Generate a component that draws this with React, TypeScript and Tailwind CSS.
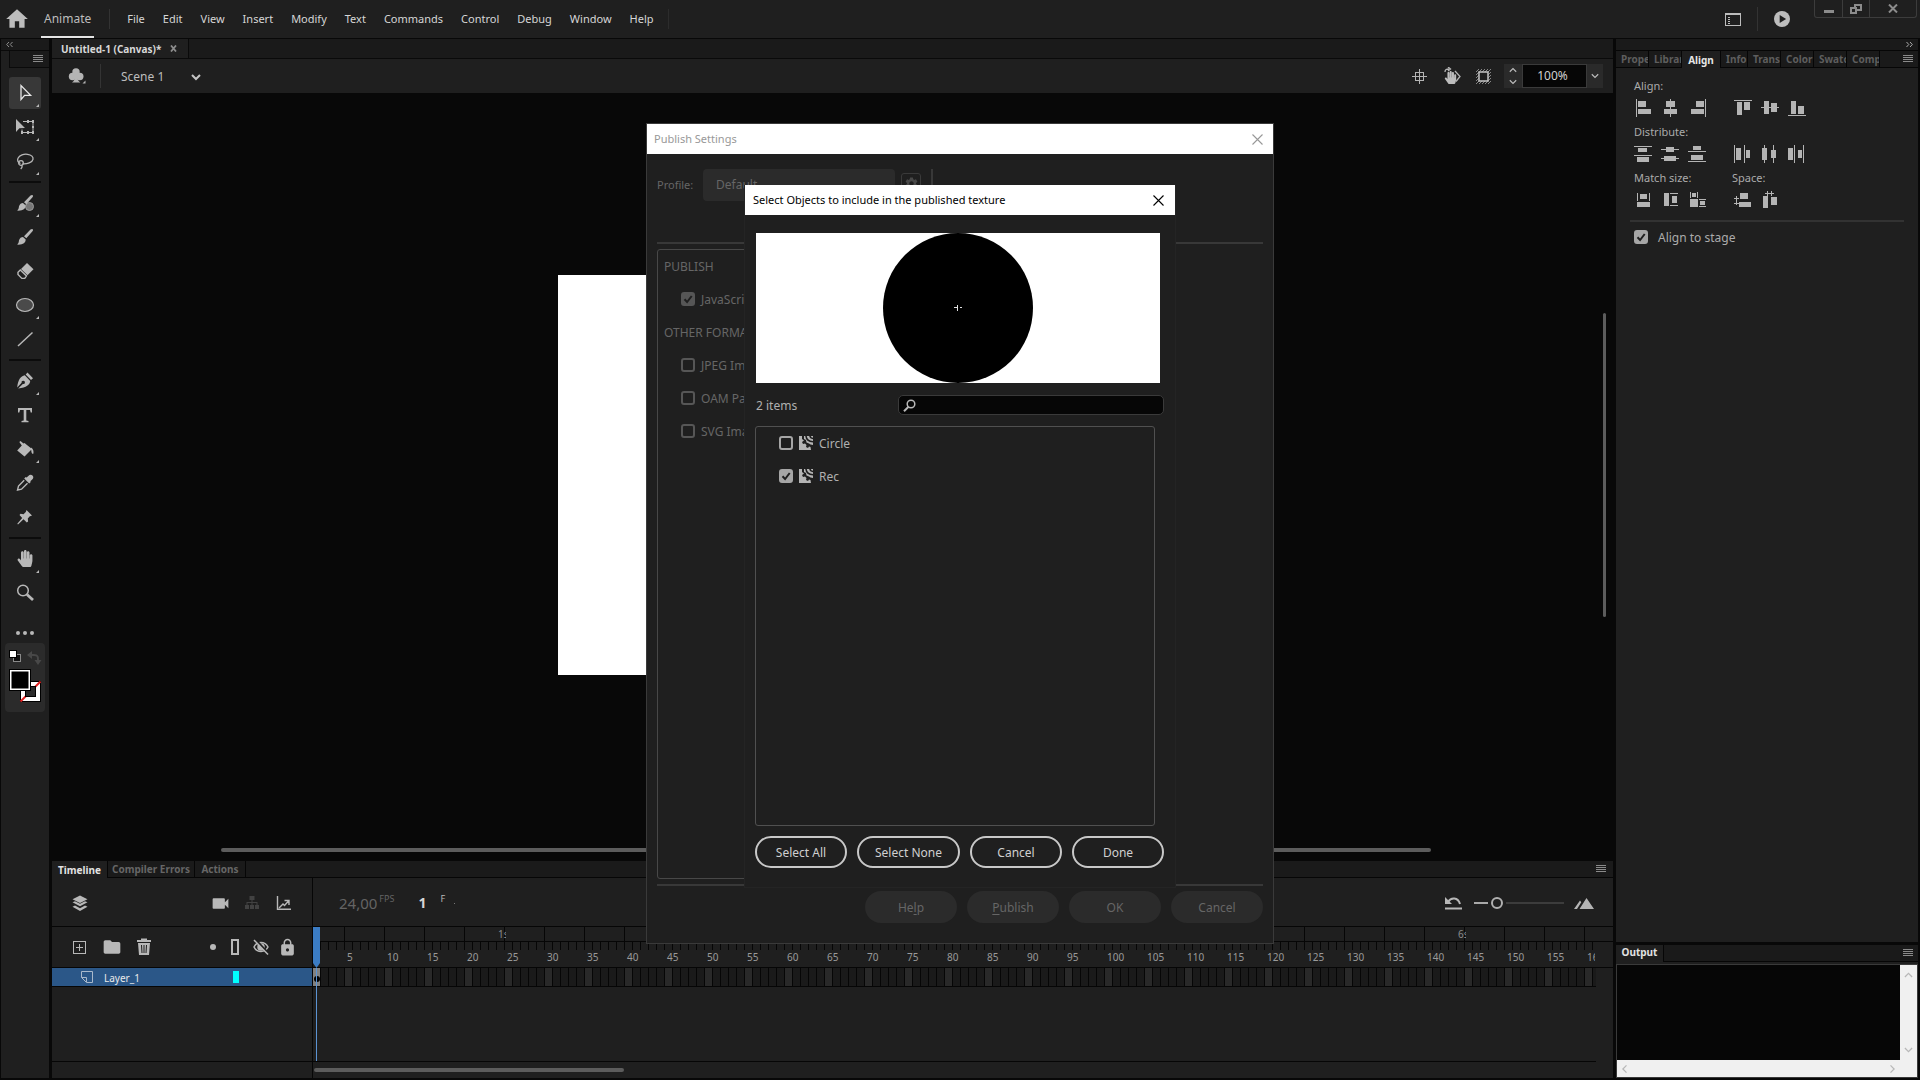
import React from "react";
import clsx from "clsx";
import { FaHandPaper } from "react-icons/fa";
import { MdFolder, MdHome, MdLock, MdPlayArrow, MdSettings, MdVideocam } from "react-icons/md";

type Rect = [number, number, number, number];

const MENUS = ["File", "Edit", "View", "Insert", "Modify", "Text", "Commands", "Control", "Debug", "Window", "Help"];

const FRAMES = Array.from({ length: 300 }, (_, i) => i + 1);
const FRAME_GROUPS = Array.from({ length: 60 }, (_, i) => (i + 1) * 5);
const SECONDS = Array.from({ length: 12 }, (_, i) => i + 1);
const FRAME_WIDTH = 8;
const FPS = 24;

const ALIGN_ICONS: Record<string, Rect[]> = {
  "Align left": [[2, 0, 1, 18], [4, 2, 8, 6], [4, 10, 13, 5]],
  "Align center": [[9, 0, 1, 18], [5, 2, 9, 6], [3, 10, 13, 5]],
  "Align right": [[17, 0, 1, 18], [8, 2, 8, 6], [3, 10, 13, 5]],
  "Align top": [[0, 1, 18, 1], [3, 3, 5, 13], [10, 3, 6, 8]],
  "Align middle": [[0, 8, 18, 1], [3, 2, 5, 13], [10, 4, 6, 9]],
  "Align bottom": [[0, 16, 18, 1], [3, 2, 5, 13], [10, 7, 6, 8]],
};

const DISTRIBUTE_ICONS: Record<string, Rect[]> = {
  "Distribute top": [[0, 1, 18, 1], [4, 3, 9, 4], [0, 10, 18, 1], [3, 12, 12, 5]],
  "Distribute middle": [[0, 4, 18, 1], [5, 2, 8, 5], [0, 13, 18, 1], [3, 11, 12, 5]],
  "Distribute bottom": [[5, 1, 8, 4], [0, 6, 18, 1], [3, 10, 12, 5], [0, 16, 18, 1]],
  "Distribute left": [[0, 0, 1, 18], [2, 3, 5, 12], [10, 0, 1, 18], [12, 5, 4, 8]],
  "Distribute center": [[3, 0, 1, 18], [1, 3, 5, 12], [12, 0, 1, 18], [10, 5, 5, 8]],
  "Distribute right": [[0, 3, 5, 12], [6, 0, 1, 18], [10, 5, 4, 8], [15, 0, 1, 18]],
};

const SIZE_ICONS: Record<string, Rect[]> = {
  "Match width": [[3, 2, 1, 8], [15, 2, 1, 8], [6, 3, 7, 5], [3, 11, 13, 5]],
  "Match height": [[3, 2, 5, 13], [9, 2, 8, 1], [9, 14, 8, 1], [11, 5, 5, 7]],
  "Match both": [[2, 1, 1, 6], [9, 1, 1, 6], [4, 2, 4, 4], [2, 8, 8, 8], [11, 8, 7, 1], [11, 15, 7, 1], [12, 10, 5, 4]],
  "Space vertically": [[2, 5, 1, 9], [0, 7, 5, 1], [0, 12, 5, 1], [6, 2, 8, 6], [5, 11, 12, 5]],
  "Space horizontally": [[4, 2, 9, 1], [6, 0, 1, 5], [10, 0, 1, 5], [2, 5, 5, 12], [10, 6, 6, 8]],
};

const RectIcons = ({ icons }: { icons: Record<string, Rect[]> }) => (
  <div className="grid grid-cols-[27px_27px_46px_27px_27px_27px]">
    {Object.entries(icons).map(([name, rects]) => (
      <button key={name} aria-label={name} className="w-[18px]">
        <svg width="18" height="18" fill="#b4b4b4" shapeRendering="crispEdges">
          {rects.map(([x, y, w, h], i) => (
            <rect key={i} x={x} y={y} width={w} height={h} />
          ))}
        </svg>
      </button>
    ))}
  </div>
);

const MenuLines = ({ label }: { label: string }) => (
  <button aria-label={label} className="shrink-0">
    <svg width="10" height="8" fill="#8a8a8a" shapeRendering="crispEdges">
      <path d="M0 0h10v1H0zM0 2h10v1H0zM0 4h10v1H0zM0 6h10v1H0z" />
    </svg>
  </button>
);

const CloseIcon = ({ size = 11 }: { size?: number }) => (
  <svg width={size} height={size} viewBox="0 0 11 11" stroke="currentColor" strokeWidth="1.1">
    <path d="M0.5 0.5l10 10M10.5 0.5l-10 10" />
  </svg>
);

const Chevron = ({ className, width = 10 }: { className?: string; width?: number }) => (
  <svg width={width} height="6" viewBox="0 0 10 6" fill="none" stroke="currentColor" strokeWidth="1.4" className={className}>
    <path d="M1 0.8l4 4 4-4" />
  </svg>
);

type CheckboxProps = { label: string; checked?: boolean; dim?: boolean; gap?: string; children?: React.ReactNode };

const Checkbox = ({ label, checked, dim, gap = "gap-[6px]", children }: CheckboxProps) => (
  <label className={clsx("flex h-4 items-center whitespace-nowrap text-[12px] leading-4", gap)}>
    <span className="grid shrink-0">
      <input
        type="checkbox"
        defaultChecked={checked}
        className={clsx(
          "peer size-[14px] appearance-none rounded-[3px] border-2 [grid-area:1/1]",
          dim ? "border-[#565656] checked:bg-[#565656]" : "border-[#a6a6a6] checked:bg-[#a6a6a6]"
        )}
      />
      <svg
        width="14"
        height="14"
        fill="none"
        stroke="#1f1f1f"
        strokeWidth="2"
        className="pointer-events-none invisible [grid-area:1/1] peer-checked:visible"
      >
        <path d="M3.5 7.2l2.6 2.8 4.6-6" />
      </svg>
    </span>
    {children}
    <span className="pt-[2px]">{label}</span>
  </label>
);

const TopBar = () => (
  <header className="flex h-[38px] items-center bg-[#1f1f1f] text-[#d6d6d6]">
    <button aria-label="Home" className="ml-1 text-[#bcbcbc]">
      <MdHome size={26} />
    </button>
    <div className="ml-[11px] flex h-full items-end">
      <button className="h-[27px] border-b-2 border-[#e4e4e4] px-[3px] text-[12px] leading-[15px] text-[#bdbdbd]">
        <span className="block h-full">Animate</span>
      </button>
    </div>
    <span className="ml-[15px] h-5 w-px bg-[#333]" />
    <nav className="ml-[17px] flex items-center gap-[18px] text-[11px] leading-4">
      {MENUS.map((menu) => (
        <button key={menu}>{menu}</button>
      ))}
    </nav>
    <span className="ml-[14px] h-5 w-px bg-[#2c2c2c]" />
    <div className="flex-1" />
    <button aria-label="Workspaces">
      <svg width="16" height="13" fill="none" stroke="#bdbdbd" shapeRendering="crispEdges">
        <path d="M0.5 0.5h15v12h-15zM0 1.5h16" />
        <path d="M2.5 4.5h2M2.5 6.5h2M2.5 8.5h2M2.5 10h2" />
      </svg>
    </button>
    <span className="mx-4 h-6 w-px bg-[#333]" />
    <button aria-label="Test movie" className="flex size-4 items-center justify-center rounded-full bg-[#bdbdbd] text-[#1f1f1f]">
      <MdPlayArrow size={14} />
    </button>
    <div className="mr-[3px] ml-6 flex h-[18px] divide-x divide-[#3c3c3c] self-start rounded-b-[3px] border-x border-b border-[#3c3c3c] text-[#8c8c8c]">
      <button aria-label="Minimize" className="flex w-7 items-center justify-center pt-[5px]">
        <span className="h-[3px] w-[10px] bg-current" />
      </button>
      <button aria-label="Restore" className="flex w-[27px] items-center justify-center">
        <svg width="12" height="10" fill="none" stroke="currentColor" strokeWidth="2">
          <path d="M1 4h5v5H1zM5 3V1h6v5H7" />
        </svg>
      </button>
      <button aria-label="Close" className="flex w-[46px] items-center justify-center">
        <svg width="10" height="9" stroke="currentColor" strokeWidth="2">
          <path d="M1 0.5l8 8M9 0.5l-8 8" />
        </svg>
      </button>
    </div>
  </header>
);

type ToolProps = { name: string; active?: boolean; more?: boolean; children: React.ReactNode };

const Tool = ({ name, active, more, children }: ToolProps) => (
  <button
    aria-label={name}
    className={clsx("relative my-px flex h-8 w-8 shrink-0 items-center justify-center rounded-[3px] text-[#b8b8b8]", active && "bg-[#383838] text-[#e8e8e8]")}
  >
    <svg width="20" height="20" viewBox="0 0 20 20" fill="currentColor">
      {children}
    </svg>
    {more && (
      <svg width="3" height="3" className="absolute right-[2px] bottom-[2px]" fill="#b8b8b8">
        <path d="M3 0v3H0z" />
      </svg>
    )}
  </button>
);

const ToolDivider = () => <span className="my-[3px] h-[2px] w-8 shrink-0 bg-[#0c0c0c]" />;

const ToolsPanel = () => (
  <aside className="flex w-12 flex-col bg-[#1f1f1f]">
    <div className="flex h-3 items-center border-b border-[#0a0a0a] bg-[#1a1a1a] pl-[5px] text-[#8f8f8f]">
      <svg width="7" height="5" fill="none" stroke="currentColor">
        <path d="M3 0L0.7 2.5 3 5M6.5 0L4.2 2.5 6.5 5" />
      </svg>
    </div>
    <div className="flex h-[17px] shrink-0 pl-2">
      <div className="flex flex-1 items-center justify-end border-b border-l border-[#0a0a0a] bg-[#1a1a1a] pr-[6px]">
        <MenuLines label="Tools menu" />
      </div>
    </div>
    <div className="flex flex-col items-center pt-2">
      <Tool name="Selection" active more>
        <path d="M6 2.5v14l3.6-4.2h6z" fill="none" stroke="currentColor" strokeWidth="1.3" />
      </Tool>
      <Tool name="Free transform" more>
        <path d="M1 2v13l3.4-3.8L10 11z" />
        <path d="M8 4.500h10v11H7v-3" fill="none" stroke="currentColor" />
        <path d="M17 3h2v3h-2zM17 14h2v3h-2zM6 14h2v3H6zM12 3h2v3h-2zM12 14h2v3h-2zM17 9h2v2h-2z" />
      </Tool>
      <Tool name="Lasso" more>
        <g fill="none" stroke="currentColor" strokeWidth="1.3">
          <path d="M5.500 12.500C3 11.500 2 9.500 3 7.300 4.500 4 9 2.800 12.500 3.300c4 .5 6 2.700 5.500 5-.7 3.200-6 5-10.500 4.500" />
          <circle cx="6" cy="12" r="2.300" />
          <path d="M6.500 14.200c1 1 .8 2.500-.8 3.800" />
        </g>
      </Tool>
      <ToolDivider />
      <Tool name="Fluid brush" more>
        <circle cx="14.500" cy="13.500" r="4" fill="#777" stroke="#999" />
        <path d="M17 2c1.200 0 1.300 1 .7 2l-6.400 7.200-2.300-2L15.500 2.600zM8 10l2.700 2.500C10.500 16 8 18 2 17.600c2-1.400 1.600-2.400 2-4.300C4.600 11.200 6.300 10 8 10z" />
      </Tool>
      <Tool name="Classic brush">
        <path d="M17 2c1.200 0 1.300 1 .7 2l-6.400 7.200-2.300-2L15.500 2.600zM8 10l2.700 2.500C10.500 16 8 18 2 17.600c2-1.400 1.600-2.400 2-4.300C4.600 11.200 6.300 10 8 10z" />
      </Tool>
      <Tool name="Eraser">
        <path d="M12 2l6.500 6.300-6 6L6 8z" />
        <path d="M5.300 8.900l6.200 6-1.700 2.500H6.800L3 13.500v-2.300z" fill="none" stroke="currentColor" strokeWidth="1.4" />
      </Tool>
      <Tool name="Oval" more>
        <ellipse cx="10" cy="10" rx="8.500" ry="6.500" fill="#4a4a4a" stroke="currentColor" strokeWidth="1.200" />
      </Tool>
      <Tool name="Line">
        <path d="M3 17L17.500 3.500" stroke="currentColor" strokeWidth="1.500" />
      </Tool>
      <ToolDivider />
      <Tool name="Pen" more>
        <path d="M12.500 1.500l5.500 5.800-2 1.700-5.300-5.500zM9.800 4.300l5.400 5.700c-.5 3.800-3.500 6.600-12 7.500L7.800 13a1.700 1.700 0 1 0-1.200-1.200L2.200 16.500C3 9 5.600 5 9.800 4.300z" />
      </Tool>
      <Tool name="Text">
        <path d="M3 3h14v4.500h-1.300l-.7-2.500h-3.700v10.500l2.200.5v1.200H6.500V16l2.200-.5V5H5l-.7 2.500H3z" />
      </Tool>
      <Tool name="Paint bucket" more>
        <path d="M5.500 2l3 2.500 1-.5 7.500 6-7.500 7.500-7.300-6L6.800 6.500 4.300 3zM16 8.500c2.500 1.500 3 4 2.200 6.500-1.800-.3-1.800-2-2.200-6.500z" />
      </Tool>
      <Tool name="Eyedropper">
        <path d="M17.500 2.500c1.300 1.300 1 3-.5 4.200l-1.700 1.500.5.800-1.600 1.400-5-5L10.700 4l.9.500L13.300 3c1.300-1.500 3-1.700 4.200-.5z" />
        <path d="M9.200 7.200L3.500 13l-1 4 4-.8 6-5.900" fill="none" stroke="currentColor" strokeWidth="1.400" />
      </Tool>
      <Tool name="Asset warp">
        <path d="M11.500 3l5.500 5.500-1.200.6-1 .1-2 2.300.3 3-1.300 1-3.300-3.300L3 17.500l-.7-.7L7.200 11 4.500 8l1-1.200 3 .4 2.300-2.200z" />
      </Tool>
      <ToolDivider />
      <Tool name="Hand" more>
        <FaHandPaper x="1.500" y="1" size={17} />
      </Tool>
      <Tool name="Zoom">
        <circle cx="8" cy="7.500" r="5.300" fill="none" stroke="currentColor" strokeWidth="1.500" />
        <path d="M12 11.500l6 5.500" stroke="currentColor" strokeWidth="2.800" />
      </Tool>
      <button aria-label="Edit toolbar" className="flex h-[33px] items-end justify-center gap-[3px] pb-2">
        <span className="size-1 rounded-full bg-[#b8b8b8]" />
        <span className="size-1 rounded-full bg-[#b8b8b8]" />
        <span className="size-1 rounded-full bg-[#b8b8b8]" />
      </button>
      <button aria-label="Fill and stroke colors" className="rounded-[4px] bg-[#2b2b2b]">
        <svg width="40" height="69">
          <rect x="8.500" y="11.500" width="7" height="7" fill="#111" stroke="#8a8a8a" />
          <rect x="4.500" y="7.500" width="7" height="7" fill="#fff" stroke="#000" />
          <path d="M25 12h4c4 0 4 2 4 5v2" fill="none" stroke="#484848" strokeWidth="2" />
          <path d="M27 8l-5 4 5 4zM29.500 17h7L33 22z" fill="#484848" />
          <rect x="15.500" y="38.500" width="20" height="20" fill="#fff" stroke="#000" />
          <path d="M15.500 58.500l20-20" stroke="#e02020" strokeWidth="2" />
          <rect x="20.500" y="43.500" width="10" height="10" fill="#2b2b2b" stroke="#000" />
          <rect x="4.500" y="26.500" width="21" height="21" fill="#fff" stroke="#000" />
          <rect x="6.500" y="28.500" width="17" height="17" fill="#000" />
        </svg>
      </button>
    </div>
  </aside>
);

const SceneBar = () => (
  <div className="flex h-[34px] items-center bg-[#1f1f1f] text-[12px] leading-4 text-[#bdbdbd]">
    <button aria-label="Edit symbols" className="ml-4">
      <svg width="18" height="18" fill="#b4b4b4">
        <circle cx="8" cy="5" r="3.700" />
        <circle cx="4.500" cy="9.500" r="3.700" />
        <circle cx="11.800" cy="9.500" r="3.700" />
        <path d="M7 8h2.300c0 4 .7 6 3 7.500H4C6.300 14 7 12 7 8zM17.500 13.500v3h-3z" />
      </svg>
    </button>
    <span className="ml-[14px] h-6 w-px bg-[#343434]" />
    <button className="ml-5 flex items-center gap-[26px] pt-[2px]">
      Scene 1
      <svg width="12" height="7" fill="none" stroke="#c4c4c4" strokeWidth="2">
        <path d="M2 1l4 4 4-4" />
      </svg>
    </button>
    <div className="flex-1" />
    <button aria-label="Center stage">
      <svg width="15" height="15" fill="none" stroke="#b4b4b4" shapeRendering="crispEdges">
        <path d="M7.500 0v15M0 7.500h15M3.500 3.500h8v8h-8z" />
      </svg>
    </button>
    <button aria-label="Rotation" className="ml-4">
      <svg width="18" height="18" fill="#b4b4b4">
        <FaHandPaper x="1" y="4" size={13} />
        <path d="M2 5c0-2.500 1.500-3 4-3M5 0l2.500 2L5 4M12 4l5 5.500-4 5" fill="none" stroke="#b4b4b4" strokeWidth="1.300" />
      </svg>
    </button>
    <button aria-label="Clip content" className="ml-[15px]">
      <svg width="15" height="15" fill="none">
        <path d="M0 3l3-3M0 6l6-6M0 9l9-9M0 12l12-12M0 15L15 0M3 15L15 3M6 15l9-9M9 15l6-6M12 15l3-3" stroke="#858585" />
        <path d="M3 3h9v9H3z" fill="#1f1f1f" stroke="#c4c4c4" strokeWidth="1.500" />
      </svg>
    </button>
    <div className="mr-[10px] ml-[13px] flex h-6 bg-[#2a2a2a]">
      <span className="flex w-[18px] flex-col items-center justify-between py-[3px]">
        <Chevron className="rotate-180" width={8} />
        <Chevron width={8} />
      </span>
      <input
        aria-label="Zoom level"
        defaultValue="100%"
        className="w-[65px] border border-[#3a3a3a] bg-[#060606] pr-1 text-center text-[12px] text-[#d0d0d0]"
      />
      <button aria-label="Zoom presets" className="flex w-4 items-center justify-center">
        <Chevron width={8} />
      </button>
    </div>
  </div>
);

const Workspace = () => (
  <section className="flex min-h-0 flex-1 flex-col">
    <div className="flex h-5 border-b border-[#0a0a0a] bg-[#1a1a1a]">
      <div className="flex items-center gap-[9px] border-r border-[#0a0a0a] bg-[#1f1f1f] pr-[11px] pl-[9px] text-[10px] leading-4 font-bold text-[#d8d8d8]">
        Untitled-1 (Canvas)*
        <button aria-label="Close document" className="text-[#8c8c8c]">
          <svg width="7" height="7" stroke="currentColor" strokeWidth="1.800">
            <path d="M1 0.500l5 6M6 0.500l-5 6" />
          </svg>
        </button>
      </div>
    </div>
    <SceneBar />
    <div className="relative flex min-h-0 flex-1 items-center justify-center overflow-hidden pb-1">
      <div className="h-[400px] w-[550px] bg-white" />
      <span className="absolute top-[220px] right-[7px] h-[304px] w-[3px] rounded-full bg-[#5c5c5c]" />
      <span className="absolute right-[182px] bottom-[9px] left-[169px] h-1 rounded-full bg-[#5c5c5c]" />
    </div>
  </section>
);

const LayerHeader = () => (
  <div className="flex h-[41px] items-center border-b border-[#060606] pr-[17px] pl-5 text-[#b8b8b8]">
    <div className="flex flex-1 items-center gap-4">
      <button aria-label="New layer" className="w-4">
        <svg width="15" height="15" fill="none" stroke="currentColor" shapeRendering="crispEdges">
          <path d="M1.500 1.500h12v12h-12zM7.500 4v7M4 7.500h7" />
        </svg>
      </button>
      <button aria-label="New folder" className="flex w-4 justify-center">
        <MdFolder size={20} className="shrink-0" />
      </button>
      <button aria-label="Delete layer" className="w-4">
        <svg width="16" height="18" fill="currentColor">
          <path d="M5 2V0.500h6V2h4v2H1V2zM2 5h12l-1 12H3zM5 7l.5 8h1L6 7zM7.500 7v8h1V7zM10 7l-.5 8h1L11 7z" fillRule="evenodd" />
        </svg>
      </button>
    </div>
    <div className="flex items-center gap-[10px]">
      <button aria-label="Highlight layers" className="flex w-2 justify-center">
        <span className="size-[6px] rounded-full bg-current" />
      </button>
      <button aria-label="Show outlines" className="flex w-4 justify-center">
        <span className="h-4 w-2 border-2 border-current" />
      </button>
      <button aria-label="Hide layers">
        <svg width="16" height="16" fill="none" stroke="currentColor" strokeWidth="1.500">
          <path d="M1 8c3-6 11-6 14 0-3 6-11 6-14 0z" />
          <circle cx="8" cy="8" r="3" fill="currentColor" />
          <path d="M3 1l13 14" stroke="#1f1f1f" strokeWidth="2" />
          <path d="M1 1l14 14.500" />
        </svg>
      </button>
      <button aria-label="Lock layers" className="flex w-4 justify-center">
        <MdLock size={19} className="shrink-0" />
      </button>
    </div>
  </div>
);

const Layers = () => (
  <div className="flex w-[261px] shrink-0 flex-col border-r border-[#060606]">
    <div className="flex h-[49px] items-center border-b border-[#060606] px-5 pt-[2px] text-[#b8b8b8]">
      <button aria-label="Layer depth" className="flex-1">
        <svg width="16" height="17" fill="currentColor">
          <path d="M8 0.500l7.500 3.700L8 8 0.500 4.200zM0.500 7.300L3 6.200l5 2.600 5-2.600 2.500 1.100L8 11.300zM0.500 11.800L3 10.600 8 13.300l5-2.700 2.500 1.200L8 16z" />
        </svg>
      </button>
      <div className="flex items-center gap-4">
        <button aria-label="Add camera" className="flex w-4 justify-center">
          <MdVideocam size={21} className="shrink-0" />
        </button>
        <button aria-label="Parenting view" className="text-[#424242]">
          <svg width="16" height="14" fill="currentColor">
            <path d="M5.500 0h5v4h-5zM1 9h4v4H1zM6 9h4v4H6zM11 9h4v4h-4zM7.500 4h1v5h-1zM2.500 6h11v1h-11zM2.500 6h1v3h-1zM12.500 6h1v3h-1z" />
          </svg>
        </button>
        <button aria-label="Graph view">
          <svg width="16" height="16" fill="none" stroke="currentColor" strokeWidth="1.400">
            <path d="M1.500 1v13.300H15" />
            <path d="M3 13l4-4 1.500 1.500L12.500 6M8.500 5.500h4.500v4.500" />
          </svg>
        </button>
      </div>
    </div>
    <LayerHeader />
    <div className="flex h-[19px] items-center border-b border-[#060606] bg-[#2b5788] pl-[29px] text-[10px] leading-4 text-[#eaeaea]">
      <svg width="12" height="12" fill="none" stroke="#a9b9cc">
        <path d="M0.500 0.500h11v11h-6l-5-5zM5.500 11v-4.500h-5" />
      </svg>
      <span className="ml-[11px] flex-1 pt-px">Layer_1</span>
      <span className="mr-[73px] h-3 w-[6px] bg-[#00ffff]" />
    </div>
    <div className="flex-1" />
    <div className="h-[17px] border-t border-[#060606]" />
  </div>
);

const FrameRuler = () => (
  <div className="relative flex min-w-0 flex-1 flex-col">
    <div className="relative flex h-[15px] overflow-hidden border-b border-[#060606]">
      <span className="w-8 shrink-0 border-r border-[#060606]" />
      {FRAME_GROUPS.map((frame) => (
        <span key={frame} className="w-10 shrink-0 border-r border-[#060606]" />
      ))}
      {SECONDS.map((second) => (
        <span
          key={second}
          className="absolute top-0 w-[9px] overflow-hidden pl-px text-[10px] leading-[14px] text-[#8c8c8c]"
          style={{ left: (second * FPS - 1) * FRAME_WIDTH }}
        >
          {second}s
        </span>
      ))}
    </div>
    <div className="h-[26px] border-b border-[#060606]">
      <div className="mr-[18px] overflow-hidden">
        <div className="flex h-2">
          {FRAMES.map((frame) => (
            <span key={frame} className="w-2 shrink-0 border-r border-[#060606]" />
          ))}
        </div>
        <div className="flex h-[15px] pl-8 text-[10px] leading-[15px] text-[#9a9a9a]">
          {FRAME_GROUPS.map((frame) => (
            <span key={frame} className="w-10 shrink-0 pl-[2px]">
              {frame}
            </span>
          ))}
        </div>
      </div>
    </div>
    <div className="mr-[17px] flex h-[19px] overflow-hidden border-b border-[#060606]">
      {FRAMES.map((frame) => (
        <span
          key={frame}
          className={clsx(
            "flex w-2 shrink-0 items-end justify-center border-r border-[#060606] pb-1",
            frame === 1 ? "bg-[#808080]" : frame % 5 === 0 ? "bg-[#292929]" : "bg-[#1a1a1a]"
          )}
        >
          {frame === 1 && <i className="size-[6px] rounded-full bg-black" />}
        </span>
      ))}
    </div>
    <div className="mr-[17px] flex-1 border-b border-[#060606]" />
    <div className="flex h-4 items-center">
      <span className="ml-px h-1 w-[310px] rounded-full bg-[#5c5c5c]" />
    </div>
    <svg width="8" height="41" className="absolute top-0 left-0" fill="#3b7cc4">
      <path d="M0 0h7v36l-3.500 5L0 36z" />
    </svg>
    <span className="absolute top-[41px] bottom-[17px] left-[3px] w-px bg-[#5b93d3]" />
  </div>
);

const Timeline = () => (
  <section className="flex h-[217px] shrink-0 flex-col bg-[#1f1f1f]">
    <div className="flex h-[17px] shrink-0 items-stretch border-b border-[#060606] bg-[#1a1a1a] pr-[7px] text-[10px] leading-4 font-bold text-[#666]">
      <button className="-mb-px w-14 border-r border-[#060606] bg-[#1f1f1f] text-[#e2e2e2]">Timeline</button>
      <button className="w-[87px] border-r border-[#060606]">Compiler Errors</button>
      <button className="w-[51px] border-r border-[#060606]">Actions</button>
      <div className="flex flex-1 items-center justify-end">
        <MenuLines label="Timeline menu" />
      </div>
    </div>
    <div className="flex min-h-0 flex-1">
      <Layers />
      <div className="flex min-w-0 flex-1 flex-col">
        <div className="flex h-[49px] items-center border-b border-[#060606] pt-[2px] pl-[26px] text-[#b8b8b8]">
          <span className="text-[15px] leading-5 text-[#646464]">24,00</span>
          <span className="mb-2 ml-[2px] text-[9px] leading-3 text-[#646464]">FPS</span>
          <span className="ml-6 text-[14px] leading-5 font-bold text-[#d6d6d6]">1</span>
          <span className="mb-2 ml-[14px] text-[9px] leading-3">F</span>
          <span className="ml-[9px] size-px bg-[#777]" />
          <div className="flex-1" />
          <button aria-label="Reset timeline zoom">
            <svg width="17" height="14" fill="none" stroke="currentColor" strokeWidth="2">
              <path d="M3 6C6 1 13 1 15 8M0 12.500h17" />
              <path d="M0 1v7h7z" fill="currentColor" stroke="none" />
            </svg>
          </button>
          <input
            type="range"
            aria-label="Timeline zoom"
            defaultValue="22"
            className="ml-3 h-3 w-[90px] appearance-none bg-[linear-gradient(to_right,#a8a8a8_14px,transparent_14px,transparent_32px,#3c3c3c_32px)] bg-[length:100%_2px] bg-center bg-no-repeat [&::-webkit-slider-thumb]:size-3 [&::-webkit-slider-thumb]:appearance-none [&::-webkit-slider-thumb]:rounded-full [&::-webkit-slider-thumb]:border-2 [&::-webkit-slider-thumb]:border-solid [&::-webkit-slider-thumb]:border-[#b0b0b0] [&::-webkit-slider-thumb]:bg-[#1f1f1f]"
          />
          <button aria-label="Fit timeline" className="mr-[19px] ml-[10px]">
            <svg width="20" height="11" fill="#b4b4b4">
              <path d="M12.500 0L20 11H5.500zM6 2.500l1.300 1.700L3 11H0z" />
            </svg>
          </button>
        </div>
        <FrameRuler />
      </div>
    </div>
  </section>
);

const PanelTab = ({ children }: { children: React.ReactNode }) => (
  <button className="w-[33px] overflow-hidden border-r border-[#060606] pl-[5px] text-left">{children}</button>
);

const AlignPanel = () => (
  <section className="flex min-h-0 flex-1 flex-col bg-[#1f1f1f] text-[#ababab]">
    <div className="flex h-3 items-center justify-end border-b border-[#060606] bg-[#1a1a1a] pr-[5px]">
      <svg width="7" height="5" fill="none" stroke="currentColor">
        <path d="M0.500 0l2.300 2.500L0.500 5M4 0l2.300 2.500L4 5" />
      </svg>
    </div>
    <div className="flex h-[17px] shrink-0 border-b border-[#060606] bg-[#1a1a1a] text-[10px] leading-4 font-bold text-[#5e5e5e]">
      <PanelTab>Prope</PanelTab>
      <PanelTab>Librar</PanelTab>
      <button className="-mb-px w-[39px] border-r border-[#060606] bg-[#1f1f1f] text-[#e6e6e6]">Align</button>
      <button className="w-[27px] overflow-hidden border-r border-[#060606] pl-[5px] text-left">Info</button>
      <PanelTab>Trans</PanelTab>
      <PanelTab>Color</PanelTab>
      <PanelTab>Swatc</PanelTab>
      <PanelTab>Comp</PanelTab>
      <div className="flex flex-1 items-center justify-end pr-[5px]">
        <MenuLines label="Panel menu" />
      </div>
    </div>
    <div className="flex flex-col gap-[6px] px-[18px] pt-[9px] text-[11px] [&_h3]:pt-[2px] [&_h3]:leading-[14px]">
      <h3>Align:</h3>
      <RectIcons icons={ALIGN_ICONS} />
      <h3>Distribute:</h3>
      <RectIcons icons={DISTRIBUTE_ICONS} />
      <div className="grid grid-cols-[98px_1fr]">
        <h3>Match size:</h3>
        <h3>Space:</h3>
      </div>
      <RectIcons icons={SIZE_ICONS} />
    </div>
    <hr className="mx-[14px] mt-[11px] mb-[7px] border-t-2 border-[#323232]" />
    <div className="pl-[18px]">
      <Checkbox label="Align to stage" checked gap="gap-[10px]" />
    </div>
  </section>
);

const OutputPanel = () => (
  <section className="flex h-[133px] shrink-0 flex-col bg-[#1f1f1f]">
    <div className="flex h-[17px] shrink-0 border-b border-[#060606] bg-[#1a1a1a] text-[10px] leading-[14px] font-bold text-[#e2e2e2]">
      <button className="-mb-px w-12 border-r border-[#060606] bg-[#1f1f1f] pb-1">Output</button>
      <div className="flex flex-1 items-center justify-end pr-[5px]">
        <MenuLines label="Output menu" />
      </div>
    </div>
    <div className="mt-[2px] grid flex-1 grid-cols-[1fr_17px] grid-rows-[1fr_17px] border border-[#3a3a3a] bg-[#f0f0f0] text-[#b8b8b8]">
      <textarea aria-label="Output" readOnly className="h-full w-full resize-none bg-[#060606] text-[11px] text-[#c8c8c8]" />
      <div className="flex flex-col items-center justify-between py-[7px]">
        <Chevron width={9} className="rotate-180" />
        <Chevron width={9} />
      </div>
      <div className="flex items-center justify-between px-[3px]">
        <Chevron width={9} className="rotate-90" />
        <Chevron width={9} className="-rotate-90" />
      </div>
    </div>
  </section>
);

const SymbolIcon = () => (
  <svg width="14" height="14" className="shrink-0">
    <path d="M0 0h14v14H0z" fill="#b4b4b4" />
    <path
      d="M3 0v3l2 1.500-2 1.500 1 2 2-.5 1.500 1.500L7 11l2 1 1-1.500 1.500.5.5 3h2V9l-2.500-.5L10 7.500 7.500 6.500 7 4 5 3V0z"
      fill="#1f1f1f"
    />
    <path d="M7 0c.3 3 2.500 5.500 7 5.800M11 0c.2 1.500 1.200 2.300 3 2.500" fill="none" stroke="#1f1f1f" strokeWidth="1.600" />
  </svg>
);

const PublishButton = ({ children }: { children: React.ReactNode }) => (
  <button className="h-8 w-[92px] rounded-full bg-[#2b2b2b] pt-[2px]">{children}</button>
);

const PublishSettings = () => (
  <div
    role="dialog"
    aria-label="Publish Settings"
    className="absolute inset-x-0 top-[123px] mx-auto flex h-[821px] w-[628px] flex-col border border-[#3a3a3a] bg-[#1f1f1f] text-[12px] leading-4 text-[#666]"
  >
    <div className="flex h-[30px] shrink-0 items-center justify-between bg-white pr-[10px] pl-[7px] text-[11px] text-[#989898]">
      Publish Settings
      <button aria-label="Close publish settings">
        <CloseIcon />
      </button>
    </div>
    <div className="flex h-[88px] items-start px-[10px] pt-[15px]">
      <label htmlFor="profile" className="mt-2 w-[46px] text-[11px]">
        Profile:
      </label>
      <select id="profile" className="h-8 w-[192px] appearance-none rounded-[4px] bg-[#2b2b2b] px-[13px]">
        <option>Default</option>
      </select>
      <button
        aria-label="Profile options"
        className="mt-1 ml-[6px] flex size-5 items-center justify-center rounded-[3px] border border-[#3a3a3a] text-[#484848]"
      >
        <MdSettings size={15} />
      </button>
      <span className="ml-[10px] h-8 w-[2px] bg-[#383838]" />
    </div>
    <hr className="mx-[10px] border-t-2 border-[#383838]" />
    <fieldset className="mt-[5px] ml-[10px] flex w-[420px] flex-1 flex-col rounded-[3px] border border-[#484848] px-[6px] pt-[9px]">
      <h3>PUBLISH</h3>
      <div className="mt-4 pl-[17px]">
        <Checkbox dim checked label="JavaScript/HTML" />
      </div>
      <h3 className="mt-[18px]">OTHER FORMATS</h3>
      <div className="mt-4 flex flex-col gap-[17px] pl-[17px]">
        <Checkbox dim label="JPEG Image" />
        <Checkbox dim label="OAM Package" />
        <Checkbox dim label="SVG Image" />
      </div>
    </fieldset>
    <hr className="mx-[10px] mt-[5px] border-t-2 border-[#383838]" />
    <div className="mt-[5px] mb-5 flex justify-end gap-[10px] px-[10px]">
      <PublishButton>
        He<u className="underline-offset-2">l</u>p
      </PublishButton>
      <PublishButton>
        <u className="underline-offset-2">P</u>ublish
      </PublishButton>
      <PublishButton>OK</PublishButton>
      <PublishButton>Cancel</PublishButton>
    </div>
  </div>
);

const OutlineButton = ({ wide, children }: { wide?: boolean; children: React.ReactNode }) => (
  <button className={clsx("h-8 rounded-full border-2 border-[#c8c8c8] pt-[2px] text-[#d0d0d0]", wide ? "w-[103px]" : "w-[92px]")}>
    {children}
  </button>
);

const SelectObjects = () => (
  <div
    role="dialog"
    aria-label="Select Objects to include in the published texture"
    className="absolute inset-x-0 top-[185px] mx-auto flex h-[703px] w-[432px] flex-col border-x border-b border-[#242424] bg-[#1f1f1f] text-[12px] leading-4 text-[#b0b0b0]"
  >
    <div className="flex h-[30px] shrink-0 items-center justify-between bg-white pr-[11px] pl-2 text-[11px] text-black">
      Select Objects to include in the published texture
      <button aria-label="Close">
        <CloseIcon />
      </button>
    </div>
    <div className="mt-[18px] mr-[15px] ml-[11px] flex h-[150px] shrink-0 items-center justify-center bg-white">
      <div className="flex size-[150px] items-center justify-center rounded-full bg-black">
        <svg width="8" height="8" stroke="#e0e0e0" fill="none">
          <path d="M3.500 1v6M0 3.500h4M6 3.500h2" />
        </svg>
      </div>
    </div>
    <div className="mt-3 flex h-5 items-center justify-between px-[11px]">
      <span className="pt-[2px]">2 items</span>
      <label className="flex h-5 w-[266px] items-center rounded-[5px] border border-[#3a3a3a] bg-[#060606] pl-1">
        <svg width="13" height="13" fill="none" stroke="#b8b8b8" strokeWidth="1.500">
          <circle cx="8" cy="5" r="3.800" />
          <path d="M5.500 7.800L1 12.300" strokeWidth="2" />
        </svg>
        <input type="text" aria-label="Search" className="min-w-0 flex-1 bg-transparent px-1 text-[12px] outline-none" />
      </label>
    </div>
    <div className="mt-[11px] mr-5 ml-[10px] flex flex-1 flex-col gap-[17px] rounded-[3px] border border-[#505050] pt-2 pl-[23px]">
      <Checkbox label="Circle">
        <SymbolIcon />
      </Checkbox>
      <Checkbox label="Rec" checked>
        <SymbolIcon />
      </Checkbox>
    </div>
    <div className="mt-[10px] mb-[19px] flex gap-[10px] pl-[10px]">
      <OutlineButton>Select All</OutlineButton>
      <OutlineButton wide>Select None</OutlineButton>
      <OutlineButton>Cancel</OutlineButton>
      <OutlineButton>Done</OutlineButton>
    </div>
  </div>
);

const App = () => (
  <div className="relative flex h-screen flex-col overflow-hidden bg-[#080808] font-['Noto_Sans',sans-serif]">
    <TopBar />
    <div className="flex min-h-0 flex-1 gap-[3px] pt-px pr-[2px] pb-[2px] pl-px">
      <ToolsPanel />
      <main className="flex min-w-0 flex-1 flex-col">
        <Workspace />
        <Timeline />
      </main>
      <aside className="flex w-[302px] shrink-0 flex-col gap-[3px]">
        <AlignPanel />
        <OutputPanel />
      </aside>
    </div>
    <PublishSettings />
    <SelectObjects />
  </div>
);

export default App;
